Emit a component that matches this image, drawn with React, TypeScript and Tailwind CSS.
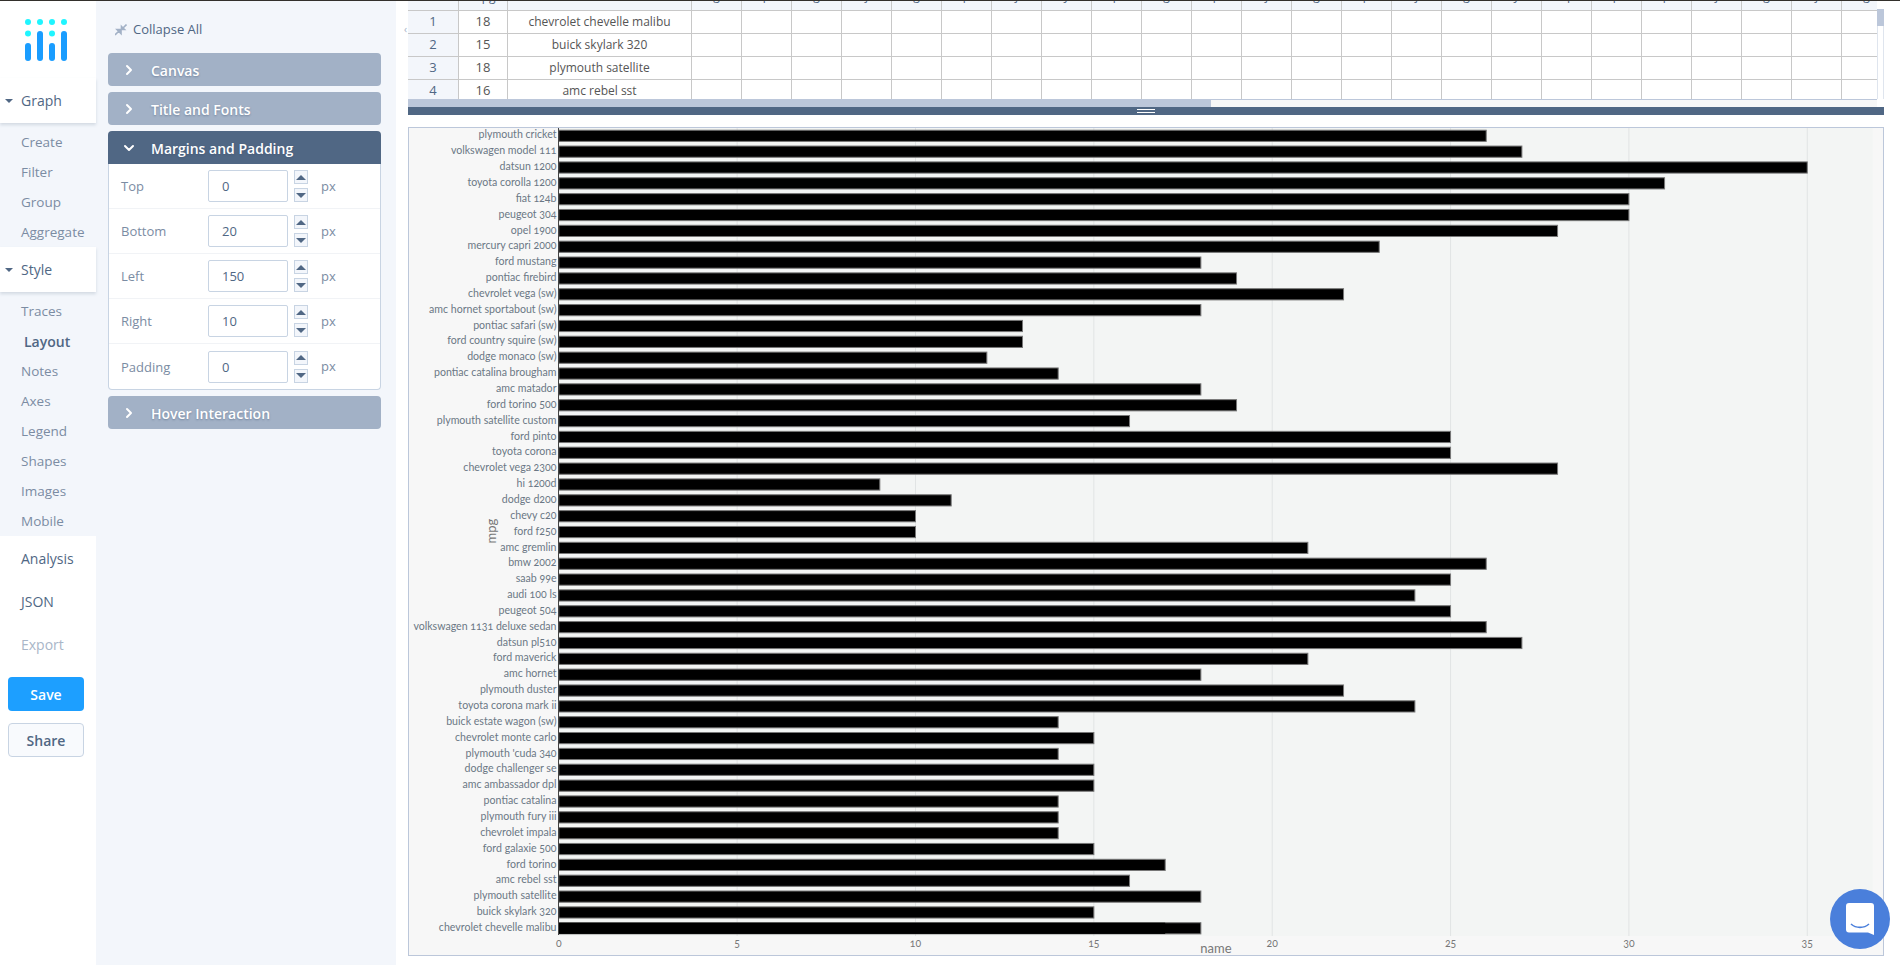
import { ChevronRight, ChevronDown } from 'lucide-react';

const bars: [string, number][] = [
  ['plymouth cricket', 26], ['volkswagen model 111', 27], ['datsun 1200', 35], ['toyota corolla 1200', 31],
  ['fiat 124b', 30], ['peugeot 304', 30], ['opel 1900', 28], ['mercury capri 2000', 23],
  ['ford mustang', 18], ['pontiac firebird', 19], ['chevrolet vega (sw)', 22], ['amc hornet sportabout (sw)', 18],
  ['pontiac safari (sw)', 13], ['ford country squire (sw)', 13], ['dodge monaco (sw)', 12], ['pontiac catalina brougham', 14],
  ['amc matador', 18], ['ford torino 500', 19], ['plymouth satellite custom', 16], ['ford pinto', 25],
  ['toyota corona', 25], ['chevrolet vega 2300', 28], ['hi 1200d', 9], ['dodge d200', 11],
  ['chevy c20', 10], ['ford f250', 10], ['amc gremlin', 21], ['bmw 2002', 26],
  ['saab 99e', 25], ['audi 100 ls', 24], ['peugeot 504', 25], ['volkswagen 1131 deluxe sedan', 26],
  ['datsun pl510', 27], ['ford maverick', 21], ['amc hornet', 18], ['plymouth duster', 22],
  ['toyota corona mark ii', 24], ['buick estate wagon (sw)', 14], ['chevrolet monte carlo', 15], ["plymouth 'cuda 340", 14],
  ['dodge challenger se', 15], ['amc ambassador dpl', 15], ['pontiac catalina', 14], ['plymouth fury iii', 14],
  ['chevrolet impala', 14], ['ford galaxie 500', 15], ['ford torino', 17], ['amc rebel sst', 16],
  ['plymouth satellite', 18], ['buick skylark 320', 15], ['chevrolet chevelle malibu', 18],
];

const rows = [
  ['1', '18', 'chevrolet chevelle malibu'],
  ['2', '15', 'buick skylark 320'],
  ['3', '18', 'plymouth satellite'],
  ['4', '16', 'amc rebel sst'],
];

const headLetters = 'gpgjgpjypgpjgpjgyqppjgjg'.split('');
const margins = [['Top', '0'], ['Bottom', '20'], ['Left', '150'], ['Right', '10'], ['Padding', '0']];

const X0 = 558.8;
const UNIT = 35.67;

function Logo() {
  return (
    <svg width="42" height="42" viewBox="0 0 42 42">
      {[3, 15, 27, 39].map((x) => <circle key={x} cx={x} cy="3" r="3" fill="#1ff5ff" />)}
      <circle cx="3" cy="14.5" r="3" fill="#1ff5ff" />
      <circle cx="27" cy="14.5" r="3" fill="#1ff5ff" />
      <rect x="0" y="24" width="6" height="18" rx="3" fill="#1a9dff" />
      <rect x="12" y="12" width="6" height="30" rx="3" fill="#1a9dff" />
      <rect x="24" y="24" width="6" height="18" rx="3" fill="#1a9dff" />
      <rect x="36" y="12" width="6" height="30" rx="3" fill="#1a9dff" />
    </svg>
  );
}

function NavHead({ label }: { label: string }) {
  return (
    <div className="flex items-center h-[45px] bg-white shadow-[0_2px_3px_rgba(80,103,132,0.2)] relative z-10">
      <span className="ml-[5px] mr-[8px] w-0 h-0 border-x-[4px] border-x-transparent border-t-[4px] border-t-[#506784]" />
      <span className="text-[14px] text-[#506784]">{label}</span>
    </div>
  );
}

function SubItem({ label, active }: { label: string; active?: boolean }) {
  return (
    <div className={`h-[30px] flex items-center ${active ? 'pl-[24px] text-[14px] font-semibold text-[#506784]' : 'pl-[21px] text-[13.5px] text-[#7b8ca3]'}`}>
      {label}
    </div>
  );
}

function Sidebar() {
  return (
    <div className="w-[96px] shrink-0 bg-white flex flex-col">
      <div className="h-[78px] pt-[19px] pl-[25px]">
        <Logo />
      </div>
      <NavHead label="Graph" />
      <div className="bg-[#f3f6fb] pt-[4px] h-[124px]">
        {['Create', 'Filter', 'Group', 'Aggregate'].map((s) => <SubItem key={s} label={s} />)}
      </div>
      <NavHead label="Style" />
      <div className="bg-[#f3f6fb] pt-[4px] h-[244px]">
        {['Traces', 'Layout', 'Notes', 'Axes', 'Legend', 'Shapes', 'Images', 'Mobile'].map((s) => (
          <SubItem key={s} label={s} active={s === 'Layout'} />
        ))}
      </div>
      <div className="pl-[21px] pt-[1px] text-[14px] text-[#506784]">
        <div className="h-[43px] flex items-center">Analysis</div>
        <div className="h-[43px] flex items-center">JSON</div>
        <div className="h-[43px] flex items-center text-[#a9b6c8]">Export</div>
      </div>
      <div className="pl-[8px] pr-[12px] pt-[11px] flex flex-col gap-[12px]">
        <div className="h-[34px] rounded-[4px] bg-[#1d9fff] text-white text-[14px] font-semibold flex items-center justify-center">Save</div>
        <div className="h-[34px] rounded-[4px] bg-[#f8fafd] border border-[#c8d4e3] text-[#506784] text-[14px] font-semibold flex items-center justify-center">Share</div>
      </div>
    </div>
  );
}

function FoldHead({ label, open }: { label: string; open?: boolean }) {
  return (
    <div className={`h-[33px] flex items-center text-white text-[14px] font-semibold [text-shadow:0_1px_2px_rgba(60,80,110,0.45)] ${open ? 'bg-[#506784] rounded-t-[4px]' : 'bg-[#a2b1c6] rounded-[4px]'}`}>
      <span className="w-[43px] pl-[13px] flex">
        {open ? <ChevronDown size={16} strokeWidth={3} /> : <ChevronRight size={16} strokeWidth={3} />}
      </span>
      <span className="pt-[1px]">{label}</span>
    </div>
  );
}

function Stepper() {
  return (
    <div className="flex flex-col gap-[4px]">
      <div className="w-[14px] h-[14px] border border-[#c8d4e3] bg-[#f3f6fb] flex items-center justify-center">
        <span className="w-0 h-0 border-x-[5px] border-x-transparent border-b-[5px] border-b-[#506784]" />
      </div>
      <div className="w-[14px] h-[14px] border border-[#c8d4e3] bg-[#f3f6fb] flex items-center justify-center">
        <span className="w-0 h-0 border-x-[5px] border-x-transparent border-t-[5px] border-t-[#506784]" />
      </div>
    </div>
  );
}

function ControlPanel() {
  return (
    <div className="w-[300px] shrink-0 bg-[#f3f6fb] pl-[12px] pr-[15px]">
      <div className="h-[53px] flex items-center pl-[7px] pt-[7px] text-[13px] text-[#506784]">
        <svg width="12" height="12" viewBox="0 0 12 12" className="mr-[6px]">
          <path d="M0 11 L4 7 M2 5.5 L6 5.5 L6 9.5 Z M11.5 .5 L8 4 M6.5 2.5 L9.5 5.5 L6.5 5.5 Z" stroke="#a2b1c6" strokeWidth="1.6" fill="#a2b1c6" />
        </svg>
        Collapse All
      </div>
      <div className="flex flex-col gap-[6px]">
        <FoldHead label="Canvas" />
        <FoldHead label="Title and Fonts" />
        <div>
          <FoldHead label="Margins and Padding" open />
          <div className="bg-white border border-t-0 border-[#c8d4e3] rounded-b-[4px]">
            {margins.map(([label, value], i) => (
              <div key={label} className={`h-[45px] flex items-center pl-[12px] text-[13px] text-[#7b8ca3] ${i < 4 ? 'border-b border-[#f1f3f6]' : ''}`}>
                <span className="w-[87px] pt-[2px]">{label}</span>
                <input
                  readOnly
                  value={value}
                  className="w-[80px] h-[32px] border border-[#c8d4e3] rounded-[2px] pl-[13px] text-[13px] text-[#506784] outline-none bg-white"
                />
                <span className="ml-[6px]"><Stepper /></span>
                <span className="ml-[13px] pt-[1px]">px</span>
              </div>
            ))}
          </div>
        </div>
        <FoldHead label="Hover Interaction" />
      </div>
    </div>
  );
}

function DataTable() {
  const colW = 'w-[50px] shrink-0';
  return (
    <div className="relative">
      <div className="overflow-hidden h-[99px] mr-[7px] border-b border-[#bcc7da] box-content">
        <div className="flex h-[10px] bg-[#f3f6fb] border-b border-[#c8c8c8] box-content text-[12px] text-[#506784] leading-[16px] text-center">
          <div className="w-[51px] shrink-0 border-r border-[#c8c8c8]" />
          <div className="w-[49px] shrink-0 border-r border-[#c8c8c8] overflow-hidden"><div className="-mt-[11px]">mpg</div></div>
          <div className="w-[184px] shrink-0 border-r border-[#c8c8c8] overflow-hidden"><div className="-mt-[11px]">name</div></div>
          {headLetters.map((l, i) => (
            <div key={i} className={`${colW} border-r border-[#c8c8c8] overflow-hidden`}><div className="-mt-[12px]">{l}</div></div>
          ))}
        </div>
        {rows.map((r) => (
          <div key={r[0]} className="flex h-[23px] border-b border-[#c8c8c8] text-[12px] text-[#506784]">
            <div className="w-[51px] shrink-0 bg-[#f3f6fb] border-r border-[#c8c8c8] flex items-center justify-center text-[13px]">{r[0]}</div>
            <div className="w-[49px] shrink-0 border-r border-[#c8c8c8] flex items-center justify-center text-[#555] text-[13px]">{r[1]}</div>
            <div className="w-[184px] shrink-0 border-r border-[#c8c8c8] flex items-center justify-center text-[#555]">{r[2]}</div>
            {headLetters.map((_, i) => <div key={i} className={`${colW} border-r border-[#c8c8c8]`} />)}
          </div>
        ))}
      </div>
      <div className="absolute right-0 top-[9px] w-[7px] h-[90px] bg-white border-x border-[#dfe5ee]">
        <div className="h-[17px] -mx-px bg-[#bcc7da]" />
      </div>
      <div className="h-[7px] bg-[#f7f7f7] mr-[7px]">
        <div className="w-[803px] h-full bg-[#bcc7da]" />
      </div>
      <div className="h-[8px] bg-[#506784] flex flex-col items-center justify-center gap-[2px]">
        <div className="w-[18px] h-px bg-white" />
        <div className="w-[18px] h-px bg-white" />
      </div>
    </div>
  );
}

function BarChart() {
  return (
    <div className="mt-[12px] h-[829px] border border-[#bcc7da] bg-[#f7f7f7]">
      <svg width="1474" height="827" viewBox="409 128 1474 827" className="block" style={{ fontFamily: 'Lato, sans-serif', fontVariantNumeric: 'oldstyle-nums' }}>
        <rect x={X0} y="128" width="1314" height="808" fill="#f3f5f4" />
        {[1, 2, 3, 4, 5, 6, 7].map((k) => (
          <line key={k} x1={X0 + k * 5 * UNIT} x2={X0 + k * 5 * UNIT} y1="128" y2="936" stroke="#e1e4e4" />
        ))}
        {bars.map(([name, v], i) => {
          const y = 135.8 + i * 15.85;
          return (
            <g key={i}>
              <rect x={X0} y={y - 5.6} width={v * UNIT} height="11.2" fill="#000" stroke="#777" strokeWidth="1" />
              <text x="556.5" y={y + 2.6} textAnchor="end" fontSize="10.6" fill="#6b7785">{name}</text>
            </g>
          );
        })}
        <rect x={X0} y={135.8 + 50 * 15.85 - 5.6} width={17 * UNIT} height="11.2" fill="#000" />
        <line x1={X0 - 0.3} x2={X0 - 0.3} y1="128" y2="935" stroke="#444" />
        {[0, 5, 10, 15, 20, 25, 30, 35].map((t) => (
          <text key={t} x={X0 + t * UNIT} y="947" textAnchor="middle" fontSize="10.5" fill="#777">{t}</text>
        ))}
        <text x="1216" y="953" textAnchor="middle" fontSize="13" fill="#777">name</text>
        <text transform="translate(496 531) rotate(-90)" textAnchor="middle" fontSize="13" fill="#777">mpg</text>
      </svg>
    </div>
  );
}

export default function App() {
  return (
    <div className="w-[1900px] h-[965px] overflow-hidden relative bg-white" style={{ fontFamily: '"Open Sans", sans-serif' }}>
      <div className="h-px bg-[#33302c] absolute top-0 inset-x-0 z-20" />
      <div className="flex h-full">
        <Sidebar />
        <ControlPanel />
        <div className="flex-1 min-w-0 relative pl-[12px] pr-[16px]">
          <span className="absolute left-[8px] top-[24px] text-[10px] leading-none text-[#a2b1c6]">‹</span>
          <DataTable />
          <BarChart />
        </div>
      </div>
      <div className="absolute left-[1830px] top-[889px] w-[60px] h-[60px] rounded-full bg-[#4a7fdb] flex items-center justify-center z-20">
        <svg width="28" height="32" viewBox="0 0 28 32">
          <path d="M3 0 H25 a3 3 0 0 1 3 3 V32 L22 29.5 H3 a3 3 0 0 1-3-3 V3 a3 3 0 0 1 3-3Z" fill="#fff" />
          <path d="M5 21 C10 25.5 18 25.5 23 21" fill="none" stroke="#4a7fdb" strokeWidth="1.6" />
        </svg>
      </div>
    </div>
  );
}
